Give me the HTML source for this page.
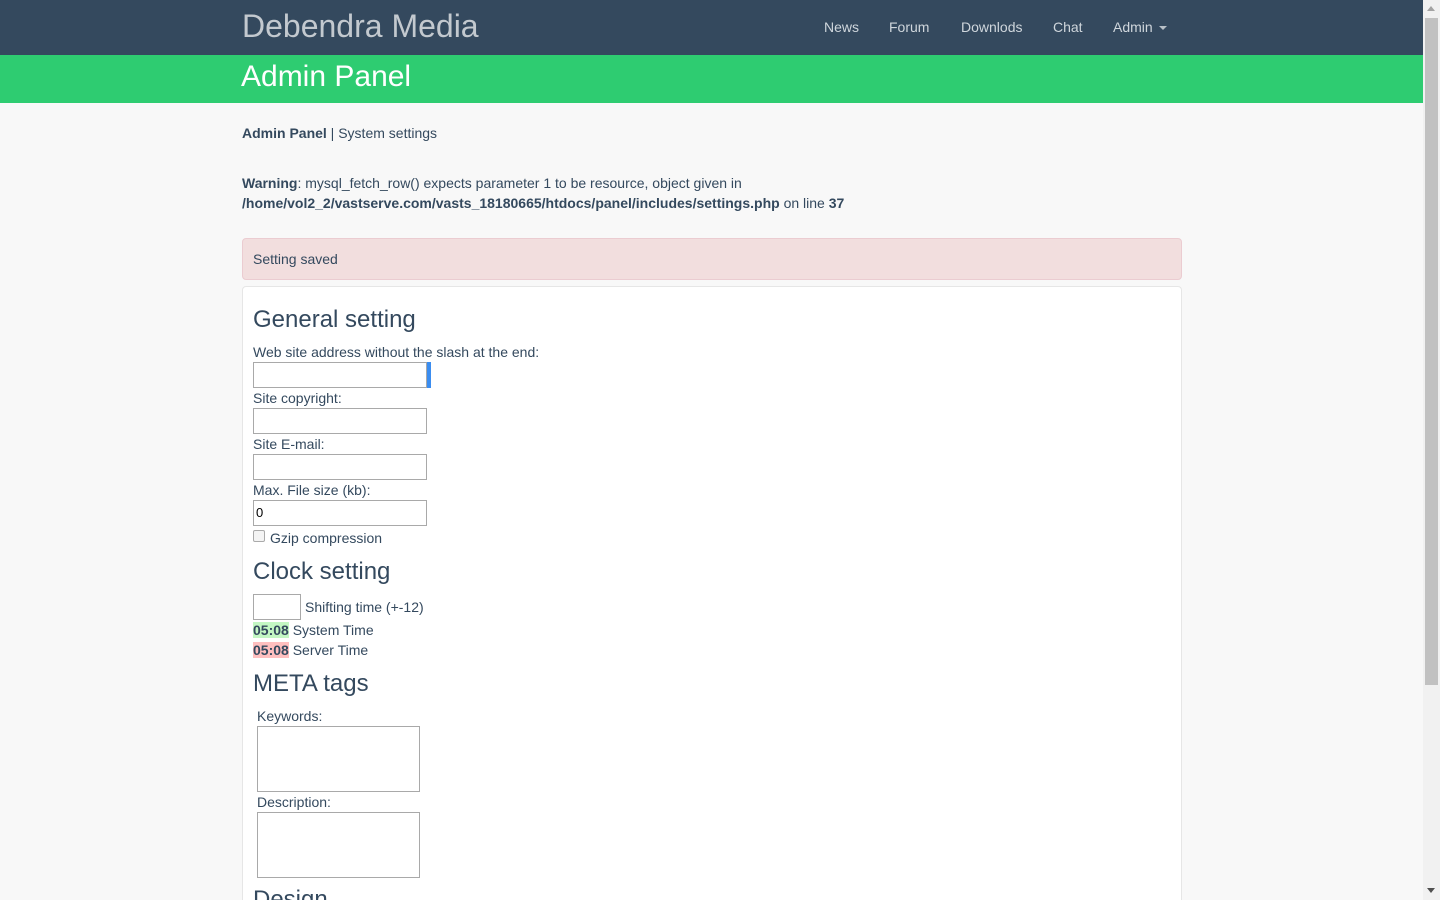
<!DOCTYPE html>
<html><head><meta charset="utf-8"><style>
*{box-sizing:border-box}
html,body{margin:0;width:1440px;height:900px;overflow:hidden}
body{background:#f8f8f8;font-family:"Liberation Sans",Arial,sans-serif;color:#34495e;font-size:14px;position:relative}
.a{position:absolute;white-space:nowrap}
.nav{position:absolute;left:0;top:0;width:1423px;height:55px;background:#34495e}
.green{position:absolute;left:0;top:55px;width:1423px;height:48px;background:#2ecc71}
.nl{position:absolute;top:19px;color:#cfd6dc;font-size:14px}
.inp{position:absolute;left:253px;width:174px;height:26px;border:1px solid #a9a9a9;background:#fff}
.ta{position:absolute;left:257px;width:163px;height:66px;border:1px solid #a9a9a9;background:#fff}
.sb{position:absolute;left:1423px;top:0;width:17px;height:900px;background:#f1f1f1}
</style></head><body>
<div class="nav"></div>
<div class="a" style="left:242px;top:8px;font-size:32px;color:#c3c9cf">Debendra Media</div>
<div class="nl" style="left:824px">News</div>
<div class="nl" style="left:889px">Forum</div>
<div class="nl" style="left:961px">Downlods</div>
<div class="nl" style="left:1053px">Chat</div>
<div class="nl" style="left:1113px">Admin</div>
<div class="a" style="left:1159px;top:26px;border-left:4px solid transparent;border-right:4px solid transparent;border-top:4px solid #b8c0c7"></div>
<div class="green"></div>
<div class="a" style="left:241px;top:60px;font-size:30px;color:#fff">Admin Panel</div>
<div class="a" style="left:242px;top:125px"><b>Admin Panel</b> | System settings</div>
<div class="a" style="left:242px;top:175px"><b>Warning</b>: mysql_fetch_row() expects parameter 1 to be resource, object given in</div>
<div class="a" style="left:242px;top:195px"><b>/home/vol2_2/vastserve.com/vasts_18180665/htdocs/panel/includes/settings.php</b> on line <b>37</b></div>
<div class="a" style="left:242px;top:238px;width:940px;height:42px;background:#f2dede;border:1px solid #ebccd1;border-radius:4px;padding:12px 10px">Setting saved</div>
<div class="a" style="left:242px;top:286px;width:940px;height:614px;background:#fff;border:1px solid #e6e6e6;border-bottom:none;border-radius:4px 4px 0 0;overflow:hidden"></div>
<div class="a" style="left:253px;top:306px;font-size:24px">General setting</div>
<div class="a" style="left:253px;top:344px">Web site address without the slash at the end:</div>
<div class="inp" style="top:362px"></div>
<div class="a" style="left:427px;top:362px;width:4px;height:26px;background:#3b8df0"></div>
<div class="a" style="left:253px;top:390px">Site copyright:</div>
<div class="inp" style="top:408px"></div>
<div class="a" style="left:253px;top:436px">Site E-mail:</div>
<div class="inp" style="top:454px"></div>
<div class="a" style="left:253px;top:482px">Max. File size (kb):</div>
<div class="inp" style="top:500px;padding:4px 2px;font-size:13px;color:#000">0</div>
<div class="a" style="left:253px;top:530px;width:12px;height:12px;border:1px solid #aaa;border-radius:2px;background:#f4f4f4"></div>
<div class="a" style="left:270px;top:530px">Gzip compression</div>
<div class="a" style="left:253px;top:558px;font-size:24px">Clock setting</div>
<div class="a" style="left:253px;top:594px;width:48px;height:26px;border:1px solid #a9a9a9;background:#fff"></div>
<div class="a" style="left:305px;top:599px">Shifting time (+-12)</div>
<div class="a" style="left:253px;top:622px"><b style="background:#c3f7c3">05:08</b> System Time</div>
<div class="a" style="left:253px;top:642px"><b style="background:#ffbfbf">05:08</b> Server Time</div>
<div class="a" style="left:253px;top:670px;font-size:24px">META tags</div>
<div class="a" style="left:257px;top:708px">Keywords:</div>
<div class="ta" style="top:726px"></div>
<div class="a" style="left:257px;top:794px">Description:</div>
<div class="ta" style="top:812px"></div>
<div class="a" style="left:253px;top:884px;height:16px;overflow:hidden"><div style="font-size:24px;padding-top:2px">Design</div></div>
<div class="sb"></div>
<div class="a" style="left:1425px;top:18px;width:13px;height:667px;background:#c1c1c1"></div>
<div class="a" style="left:1427px;top:6px;border-left:4px solid transparent;border-right:4px solid transparent;border-bottom:5px solid #a3a3a3"></div>
<div class="a" style="left:1427px;top:888px;border-left:4px solid transparent;border-right:4px solid transparent;border-top:5px solid #505050"></div>
</body></html>
